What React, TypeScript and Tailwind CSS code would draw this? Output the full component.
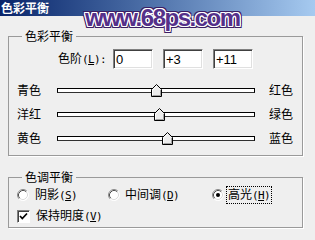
import React from "react";

const K = ({ k, colon }: { k: string; colon?: boolean }) => (
  <span className="font-['DejaVu_Sans_Mono',monospace] text-[11px] tracking-[-0.6px]">
    (<span className="underline underline-offset-[1px]">{k}</span>){colon ? ":" : ""}
  </span>
);

function Radio({ checked }: { checked?: boolean }) {
  return (
    <svg width="12" height="12" viewBox="0 0 12 12" className="shrink-0">
      <circle cx="6" cy="6" r="5.5" fill="#fff" />
      <path d="M2.11 9.89 A5.5 5.5 0 0 1 9.89 2.11" fill="none" stroke="#8a8a8a" />
      <path d="M2.82 9.18 A4.5 4.5 0 0 1 9.18 2.82" fill="none" stroke="#505050" />
      <path d="M9.89 2.11 A5.5 5.5 0 0 1 2.11 9.89" fill="none" stroke="#ffffff" />
      <path d="M9.18 2.82 A4.5 4.5 0 0 1 2.82 9.18" fill="none" stroke="#dcdcdc" />
      {checked && <circle cx="6" cy="6" r="2" fill="#000" />}
    </svg>
  );
}

function Thumb() {
  return (
    <svg width="12" height="14" viewBox="0 0 12 14">
      <path d="M5.5 0.5 L10.5 5.5 L10.5 12.5 L0.5 12.5 L0.5 5.5 Z" fill="#ececec" stroke="#000" />
      <path d="M1.5 11.5 L1.5 6 L5.5 2" fill="none" stroke="#fff" />
      <path d="M9.5 6 L9.5 11.5 L1.5 11.5" fill="none" stroke="#a0a0a0" />
    </svg>
  );
}

function Slider({ left, right, pos }: { left: string; right: string; pos: number }) {
  return (
    <div className="h-[24px] flex items-center pl-[8px]">
      <div className="w-[40px] text-[12px] leading-[14px]">{left}</div>
      <div className="relative w-[198px] h-[5px] bg-white border border-[#000] border-b-[#303030]">
        <div className="absolute top-[-5px]" style={{ left: pos }}>
          <Thumb />
        </div>
      </div>
      <div className="ml-[14px] text-[12px] leading-[14px]">{right}</div>
    </div>
  );
}

function Field({ value }: { value: string }) {
  return (
    <div className="w-[40px] h-[20px] bg-white border border-t-[#808080] border-l-[#808080] border-b-white border-r-white shadow-[inset_1px_1px_0_#404040,inset_-1px_-1px_0_#e0e0e0] flex items-center pl-[2px] font-['Liberation_Sans',sans-serif] text-[13px] leading-none">
      {value}
    </div>
  );
}

export default function App() {
  return (
    <div className="relative w-[315px] h-[240px] overflow-hidden bg-[#efefef] text-black font-['Noto_Sans_CJK_SC',sans-serif]">
      <div className="h-[16px] bg-gradient-to-r from-[#0a246a] to-[#a6caf0] text-white font-bold text-[12px] leading-[16px] pl-[1px]">
        色彩平衡
      </div>

      <fieldset className="mt-[13px] ml-[8px] w-[295px] border border-[#9a9a9a] shadow-[1px_1px_0_#ffffff] pb-[5px]">
        <legend className="ml-[13px] px-[3px] text-[12px] leading-[14px]">色彩平衡</legend>
        <div className="pt-[6px] pl-[49px] flex items-center h-[26px]">
          <div className="w-[55px] text-[12px] leading-[14px] whitespace-nowrap">
            色阶<K k="L" colon />
          </div>
          <div className="flex gap-[10px]">
            <Field value="0" />
            <Field value="+3" />
            <Field value="+11" />
          </div>
        </div>
        <div className="mt-[9px]">
          <Slider left="青色" right="红色" pos={93} />
          <Slider left="洋红" right="绿色" pos={96} />
          <Slider left="黄色" right="蓝色" pos={104} />
        </div>
      </fieldset>

      <fieldset className="mt-[14px] ml-[8px] w-[295px] border border-[#9a9a9a] shadow-[1px_1px_0_#ffffff] pb-[3px]">
        <legend className="ml-[13px] px-[3px] text-[12px] leading-[14px]">色调平衡</legend>
        <div className="mt-[3px] h-[16px] pl-[8px] flex items-center text-[12px] leading-[14px]">
          <div className="w-[91px] flex items-center gap-[6px]">
            <Radio />
            <span>阴影<K k="S" /></span>
          </div>
          <div className="w-[104px] flex items-center gap-[5px]">
            <Radio />
            <span>中间调<K k="D" /></span>
          </div>
          <div className="flex items-center gap-[3px]">
            <Radio checked />
            <span className="outline outline-1 outline-dotted outline-[#000] px-[1px] leading-[14px]">高光<K k="H" /></span>
          </div>
        </div>
        <div className="mt-[5px] h-[16px] pl-[8px] flex items-center gap-[6px] text-[12px] leading-[14px]">
          <div className="w-[13px] h-[13px] bg-white border border-t-[#808080] border-l-[#808080] border-b-white border-r-white shadow-[inset_1px_1px_0_#404040] flex items-center justify-center">
            <svg width="9" height="9" viewBox="0 0 9 9">
              <path d="M1 4 L3.3 6.5 L8 1.5" stroke="#000" strokeWidth="1.7" fill="none" />
            </svg>
          </div>
          <span>保持明度<K k="V" /></span>
        </div>
      </fieldset>

      <div className="absolute left-[85px] top-[6px] font-['Liberation_Sans',sans-serif] font-bold text-[24px] leading-none tracking-[-1.5px] text-[#55308a] [text-shadow:1px_0_0_#fff,-1px_0_0_#fff,0_1px_0_#fff,0_-1px_0_#fff,1px_1px_0_#fff,-1px_-1px_0_#fff,1px_-1px_0_#fff,-1px_1px_0_#fff,2px_0_0_#3b1d63,-2px_0_0_#3b1d63,0_2px_0_#3b1d63,0_-2px_0_#3b1d63,2px_2px_0_#3b1d63,-2px_-2px_0_#3b1d63,2px_-2px_0_#3b1d63,-2px_2px_0_#3b1d63]">
        www.68ps.com
      </div>
    </div>
  );
}
